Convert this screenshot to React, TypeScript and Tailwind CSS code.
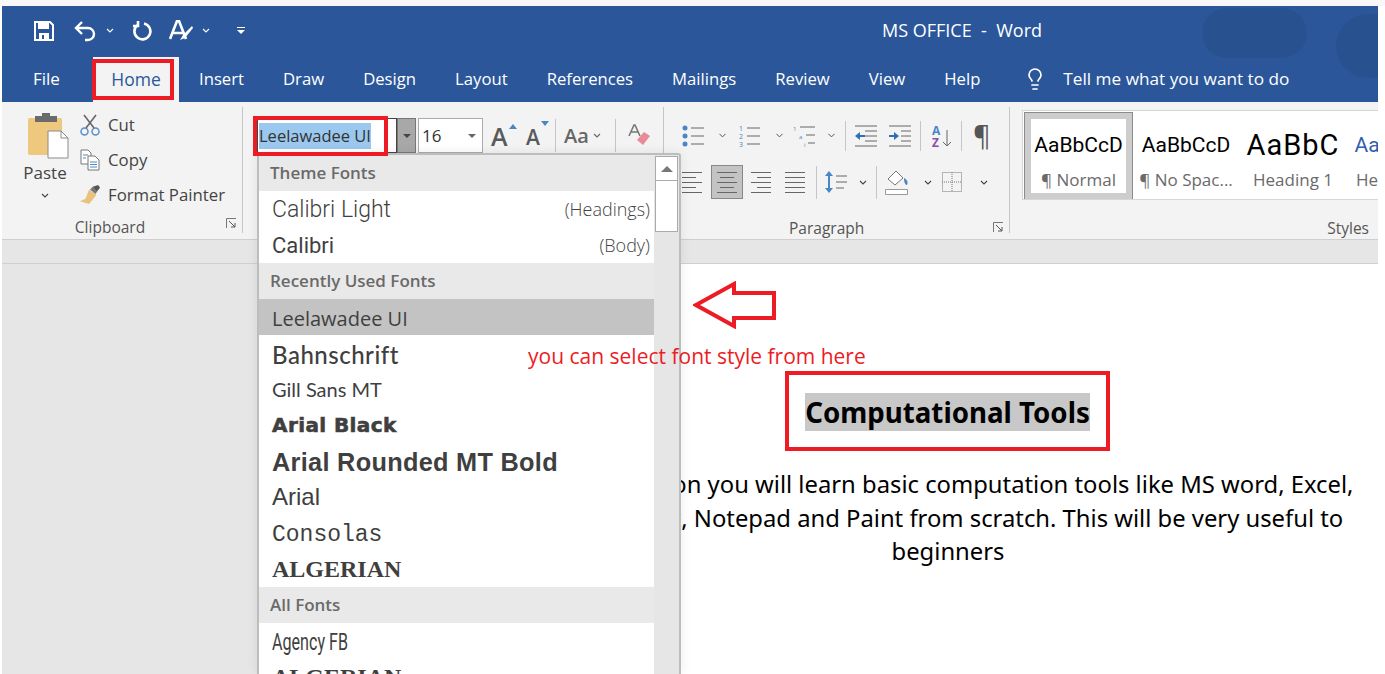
import { ChevronDown, Lightbulb } from 'lucide-react'

const tabs = ['Insert', 'Draw', 'Design', 'Layout', 'References', 'Mailings', 'Review', 'View', 'Help']

function Caret({ className = '' }: { className?: string }) {
  return (
    <svg width="8" height="5" viewBox="0 0 8 5" className={className}>
      <path d="M1 1l3 3 3-3" fill="none" stroke="currentColor" strokeWidth="1.1" />
    </svg>
  )
}

function SaveIcon() {
  return (
    <svg width="20" height="20" viewBox="0 0 20 20">
      <path d="M1 1h15l3 3v15H1z" fill="none" stroke="#fff" strokeWidth="2" />
      <path d="M4 2h11v6H4z" fill="#fff" />
      <path d="M5 12h10v7H5z" fill="#fff" />
      <path d="M8 14h2v4H8z" fill="#2b579a" />
    </svg>
  )
}

function Launcher() {
  return (
    <svg width="11" height="11" viewBox="0 0 11 11">
      <path d="M.5 10V.5H10" fill="none" stroke="#777" />
      <path d="M3 3l6 6M9 5v4H5" fill="none" stroke="#555" />
    </svg>
  )
}

function Lines({ kind }: { kind: 'left' | 'center' | 'right' | 'justify' }) {
  const rows = [
    [0, 20],
    [kind === 'left' ? 0 : kind === 'center' ? 3 : kind === 'right' ? 6 : 0, kind === 'justify' ? 20 : 14],
    [0, 20],
    [kind === 'left' ? 0 : kind === 'center' ? 3 : kind === 'right' ? 6 : 0, kind === 'justify' ? 20 : 14],
    [0, 20],
  ]
  return (
    <svg width="20" height="21" viewBox="0 0 20 21">
      {rows.map((r, i) => (
        <rect key={i} x={r[0]} y={i * 5} width={r[1]} height="1" fill="#666" />
      ))}
    </svg>
  )
}

function FontRow({ label, className, hint, selected }: { label: string; className: string; hint?: string; selected?: boolean }) {
  return (
    <div className={`h-[36px] shrink-0 flex items-center justify-between pl-[13px] pr-[4px] text-[#3f3f3f] ${selected ? 'bg-[#c3c3c3]' : 'bg-white'}`}>
      <span className={`whitespace-nowrap ${className}`}>{label}</span>
      {hint ? <span className="text-[18px] font-['Open_Sans',sans-serif] font-light text-[#444]">{hint}</span> : null}
    </div>
  )
}

function FontHeader({ label }: { label: string }) {
  return (
    <div className="h-[36px] shrink-0 flex items-center pl-[11px] bg-[#e9e9e9] text-[#6a6a6a] text-[17px] font-semibold font-['Open_Sans',sans-serif]">
      {label}
    </div>
  )
}

function StyleCard({ sample, label, sampleClass, w, active }: { sample: string; label: string; sampleClass: string; w: string; active?: boolean }) {
  return (
    <div className={`${w} h-[86px] shrink-0 flex flex-col items-center bg-white overflow-hidden ${active ? 'border-[6px] border-[#cdcdcd] outline outline-1 outline-[#8c8c8c]' : 'pt-[6px]'}`}>
      <div className={`h-[49px] pt-[4px] flex items-center whitespace-nowrap ${sampleClass}`}>{sample}</div>
      <div className="text-[17px] leading-[22px] pt-[1px] text-[#6a6a6a] whitespace-nowrap">{label}</div>
    </div>
  )
}

export default function App() {
  return (
    <div className="relative w-[1385px] h-[674px] overflow-hidden bg-white font-['Open_Sans',sans-serif]">
      <div className="h-[6px] bg-[#f8f8f8]" />
      <div className="ml-[2px] w-[1376px] h-[668px] flex flex-col bg-[#e6e6e6]">
        {/* title + tabs */}
        <div className="relative h-[96px] shrink-0 bg-[#2b579a] text-white">
          <div className="absolute right-0 top-0 w-[180px] h-[80px] overflow-hidden opacity-40">
            <div className="absolute left-[4px] top-[2px] w-[105px] h-[50px] rounded-full bg-[#264a80]" />
            <div className="absolute left-[138px] top-[8px] w-[70px] h-[64px] rounded-full bg-[#264a80]" />
          </div>
          <div className="flex items-center h-[49px] pl-[32px]">
            <SaveIcon />
            <svg width="24" height="22" viewBox="0 0 24 22" className="ml-[20px]">
              <path d="M8 2L2 8l6 6M2 8h12a6 6 0 0 1 0 12h-3" fill="none" stroke="#fff" strokeWidth="2.4" />
            </svg>
            <Caret className="ml-[8px]" />
            <svg width="20" height="22" viewBox="0 0 20 22" className="ml-[18px]">
              <path d="M12 3.5a8 8 0 1 1-6.5 1.5M6 1v5H1" fill="none" stroke="#fff" strokeWidth="2.6" />
            </svg>
            <svg width="24" height="22" viewBox="0 0 24 22" className="ml-[17px]">
              <path d="M1 19L8 1h2l7 18M4 13h10" fill="none" stroke="#fff" strokeWidth="2.6" />
              <path d="M23 6l-9 9-3 5 5-2 8-10z" fill="#fff" />
            </svg>
            <Caret className="ml-[9px]" />
            <svg width="8" height="8" viewBox="0 0 8 8" className="ml-[27px]">
              <path d="M0 0h8v1H0zM0 3h8L4 7z" fill="#fff" />
            </svg>
            <div className="absolute left-[880px] top-[11px] text-[18px] leading-[26px] whitespace-pre">MS OFFICE  -  Word</div>
          </div>
          <div className="flex items-end h-[47px]">
            <div className="w-[91px] h-[47px] pl-[31px] leading-[47px] text-[17px]">File</div>
            <div className="relative w-[86px] h-[45px] bg-[#f3f3f3] text-[#2b579a] text-[17.5px] flex items-center justify-center">
              Home
              <div className="absolute -left-[1px] top-[2px] w-[82px] h-[41px] border-[4px] border-[#ed1c24]" />
            </div>
            <div className="flex items-center h-[47px] pl-[20px] gap-[39px] text-[16.7px]">
              {tabs.map((t) => (
                <span key={t}>{t}</span>
              ))}
            </div>
            <div className="flex items-center h-[47px] ml-[43px] text-[17.2px]">
              <Lightbulb size={24} strokeWidth={1.7} />
              <span className="ml-[16px]">Tell me what you want to do</span>
            </div>
          </div>
        </div>

        {/* ribbon */}
        <div className="h-[138px] shrink-0 bg-[#f3f3f3] border-b-[1px] border-[#cfcfcf] flex text-[#444] relative">
          <div className="w-[241px] h-[126px] mt-[5px] border-r border-[#c6c6c6] relative shrink-0">
            <div className="flex h-[110px]">
              <div className="w-[78px] pl-[8px] flex flex-col items-center pt-[6px]">
                <svg width="44" height="46" viewBox="0 0 44 46" className="ml-[10px]">
                  <path d="M0 7a2 2 0 0 1 2-2h30a2 2 0 0 1 2 2v35H2a2 2 0 0 1-2-2z" fill="#edc87e" />
                  <path d="M7 3h7V0h8v3h7v6H7z" fill="#6b6b6b" />
                  <path d="M20 18h13l7 7v20H20z" fill="#fff" stroke="#8a8a8a" />
                  <path d="M33 18v7h7" fill="none" stroke="#8a8a8a" />
                </svg>
                <span className="text-[17px] leading-[26px] mt-[1px]">Paste</span>
                <Caret className="mt-[7px]" />
              </div>
              <div className="flex flex-col text-[16.8px] leading-[35px]">
                <div className="flex items-center gap-[8px]">
                  <svg width="20" height="22" viewBox="0 0 20 22">
                    <circle cx="4.5" cy="17.5" r="3.5" fill="none" stroke="#5b8fc7" strokeWidth="1.5" />
                    <circle cx="15.5" cy="17.5" r="3.5" fill="none" stroke="#5b8fc7" strokeWidth="1.5" />
                    <path d="M6 14L16 1M14 14L4 1" stroke="#666" strokeWidth="1.6" />
                  </svg>
                  Cut
                </div>
                <div className="flex items-center gap-[8px]">
                  <svg width="20" height="22" viewBox="0 0 20 22">
                    <path d="M1 1h7l3 3v11H1z" fill="#fff" stroke="#777" />
                    <path d="M8 7h7l4 4v10H8z" fill="#fff" stroke="#777" />
                    <path d="M3 6h5M3 9h3M10 13h7M10 15.5h7M10 18h7" stroke="#4f86c0" />
                  </svg>
                  Copy
                </div>
                <div className="flex items-center gap-[8px]">
                  <svg width="20" height="22" viewBox="0 0 22 22">
                    <path d="M14 2l6-2 2 3-4 5z" fill="#555" />
                    <path d="M10 5l8 6-8 10-10-3 6-3z" fill="#e9c27e" />
                    <path d="M11 5l3-3 5 5-2 3z" fill="#777" />
                  </svg>
                  Format Painter
                </div>
              </div>
            </div>
            <div className="relative text-center text-[15.5px] leading-[20px] text-[#555] pr-[24px]">
              Clipboard
              <span className="absolute right-[5px] top-[1px]"><Launcher /></span>
            </div>
          </div>

          {/* font group */}
          <div className="w-[421px] h-[126px] mt-[5px] shrink-0 flex flex-col pl-[14px] pt-[11px] border-r border-[#c6c6c6]">
            <div className="flex items-center h-[35px]">
              <div className="w-[140px] h-[35px] bg-white border border-[#444] flex items-center">
                <span className="bg-[#9bc8ee] text-[#333] text-[16.5px] leading-[26px] ml-[1px]">Leelawadee UI</span>
              </div>
              <div className="w-[19px] h-[35px] bg-[#a8a8a8] border border-[#777] flex items-center justify-center">
                <svg width="8" height="4" viewBox="0 0 8 4"><path d="M0 0h8L4 4z" fill="#444" /></svg>
              </div>
              <div className="ml-[2px] w-[65px] h-[35px] bg-white border border-[#ababab] flex items-center justify-between pl-[3px] pr-[6px] text-[17px] text-[#333]">
                16
                <svg width="8" height="4" viewBox="0 0 8 4"><path d="M0 0h8L4 4z" fill="#666" /></svg>
              </div>
              <div className="relative ml-[8px] w-[24px] text-[25px] leading-[30px] font-semibold text-[#5a5a5a]">
                A
                <svg width="8" height="5" viewBox="0 0 8 5" className="absolute right-[-2px] top-[3px]"><path d="M0 5h8L4 0z" fill="#4a86c5" /></svg>
              </div>
              <div className="relative ml-[11px] w-[20px] text-[21px] leading-[30px] font-semibold text-[#5a5a5a] pt-[3px]">
                A
                <svg width="8" height="5" viewBox="0 0 8 5" className="absolute right-[-3px] top-[2px]"><path d="M0 0h8L4 5z" fill="#4a86c5" /></svg>
              </div>
              <div className="ml-[9px] w-px h-[33px] bg-[#c6c6c6]" />
              <div className="ml-[8px] flex items-center gap-[4px] text-[20px] font-semibold text-[#666]">
                Aa <Caret />
              </div>
              <div className="ml-[14px] w-px h-[33px] bg-[#c6c6c6]" />
              <svg width="24" height="24" viewBox="0 0 24 24" className="ml-[12px]">
                <path d="M1 12L6 1h1l5 11M3 8h7" fill="none" stroke="#777" strokeWidth="1.6" />
                <path d="M16 8l6 4-7 9-6-5z" fill="#e98a97" />
              </svg>
            </div>
          </div>

          {/* paragraph */}
          <div className="w-[345px] h-[126px] mt-[5px] shrink-0 relative">
            <div className="flex items-center h-[37px] mt-[10px] pl-[18px]">
              <svg width="23" height="22" viewBox="0 0 23 22">
                <circle cx="3" cy="3" r="2.5" fill="#4a86c5" /><circle cx="3" cy="11" r="2.5" fill="#4a86c5" /><circle cx="3" cy="19" r="2.5" fill="#4a86c5" />
                <path d="M9 3h13M9 11h13M9 19h13" stroke="#666" />
              </svg>
              <ChevronDown size={11} className="ml-[12px] text-[#444]" />
              <svg width="23" height="24" viewBox="0 0 23 24" className="ml-[10px]">
                <text x="1" y="7" fontSize="7" fill="#4a86c5">1</text><text x="1" y="15" fontSize="7" fill="#4a86c5">2</text><text x="1" y="23" fontSize="7" fill="#4a86c5">3</text>
                <path d="M9 4h13M9 12h13M9 20h13" stroke="#666" />
              </svg>
              <ChevronDown size={11} className="ml-[13px] text-[#444]" />
              <svg width="23" height="24" viewBox="0 0 23 24" className="ml-[8px]">
                <text x="0" y="7" fontSize="6" fill="#4a86c5">1</text><text x="6" y="15" fontSize="6" fill="#4a86c5">a</text><text x="11" y="23" fontSize="6" fill="#4a86c5">i</text>
                <path d="M7 3h15M13 11h9M15 19h7" stroke="#666" />
              </svg>
              <ChevronDown size={11} className="ml-[10px] text-[#444]" />
              <div className="ml-[8px] w-px h-[30px] bg-[#c6c6c6]" />
              <svg width="22" height="22" viewBox="0 0 22 22" className="ml-[9px]">
                <path d="M0 1h22M10 6h12M10 11h12M10 16h12M0 21h22" stroke="#666" />
                <path d="M0 11l5-4v3h5v2H5v3z" fill="#2f6fb5" />
              </svg>
              <svg width="22" height="22" viewBox="0 0 22 22" className="ml-[12px]">
                <path d="M0 1h22M12 6h10M12 11h10M12 16h10M0 21h22" stroke="#666" />
                <path d="M10 11l-5-4v3H0v2h5v3z" fill="#2f6fb5" />
              </svg>
              <div className="ml-[9px] w-px h-[30px] bg-[#c6c6c6]" />
              <svg width="20" height="24" viewBox="0 0 20 24" className="ml-[11px]">
                <text x="0" y="11" fontSize="12" fontWeight="700" fill="#4a86c5">A</text>
                <text x="0" y="23" fontSize="12" fontWeight="700" fill="#8a4fa8">Z</text>
                <path d="M15 6v16M11 18l4 4 4-4" fill="none" stroke="#666" />
              </svg>
              <div className="ml-[9px] w-px h-[30px] bg-[#c6c6c6]" />
              <span className="ml-[11px] text-[27px] leading-[30px] text-[#555]">¶</span>
            </div>
            <div className="flex items-center h-[36px] mt-[10px] pl-[18px]">
              <Lines kind="left" />
              <div className="w-[32px] h-[34px] bg-[#c3c3c3] border border-[#888] flex items-center justify-center ml-[9px]"><Lines kind="center" /></div>
              <div className="ml-[8px]"><Lines kind="right" /></div>
              <div className="ml-[14px]"><Lines kind="justify" /></div>
              <div className="ml-[11px] w-px h-[33px] bg-[#c6c6c6]" />
              <svg width="23" height="24" viewBox="0 0 23 24" className="ml-[8px]">
                <path d="M4 1l4 5H5v12h3l-4 5-4-5h3V6H0z" fill="#4a86c5" />
                <path d="M11 6h11M11 12h11M11 18h8" stroke="#666" />
              </svg>
              <Caret className="ml-[11px] text-[#444]" />
              <div className="ml-[9px] w-px h-[33px] bg-[#c6c6c6]" />
              <svg width="24" height="26" viewBox="0 0 24 26" className="ml-[8px]">
                <path d="M3 10l8-8 7 7-8 7z" fill="#fff" stroke="#777" />
                <path d="M19 9c4 2 4 5 3 7-2 0-3-3-3-7z" fill="#4a86c5" />
                <path d="M.5 20.5h22v5H.5z" fill="#fff" stroke="#999" />
              </svg>
              <Caret className="ml-[15px] text-[#444]" />
              <svg width="20" height="20" viewBox="0 0 20 20" className="ml-[10px]">
                <path d="M.5.5h19v19H.5z" fill="none" stroke="#777" strokeDasharray="1 1" />
                <path d="M10 0v20M0 10h20" stroke="#777" strokeDasharray="1 1" />
              </svg>
              <Caret className="ml-[18px] text-[#444]" />
            </div>
            <div className="absolute top-[111px] left-[125px] text-[15.5px] leading-[20px] text-[#555]">Paragraph</div>
            <span className="absolute right-[5px] top-[115px]"><Launcher /></span>
          </div>

          {/* styles */}
          <div className="flex-1 min-w-0 h-[126px] mt-[5px] border-l border-[#c6c6c6] relative pl-[12px] pt-[3px]">
            <div className="flex h-[90px] overflow-hidden bg-white border border-[#d6d6d6] border-r-0 pl-[2px] pt-[2px] gap-[1px]">
              <StyleCard sample="AaBbCcD" label="¶ Normal" sampleClass="text-[21px] text-black font-['Roboto',sans-serif]" w="w-[107px]" active />
              <StyleCard sample="AaBbCcD" label="¶ No Spac..." sampleClass="text-[21px] text-black font-['Roboto',sans-serif]" w="w-[106px]" />
              <StyleCard sample="AaBbC" label="Heading 1" sampleClass="text-[29px] text-black font-['Roboto',sans-serif] tracking-[1px]" w="w-[106px]" />
              <StyleCard sample="Aa" label="He" sampleClass="text-[21px] text-[#2f5fb3] font-['Roboto',sans-serif]" w="w-[40px]" />
            </div>
            <div className="absolute right-[9px] top-[111px] text-[15.5px] leading-[20px] text-[#555]">Styles</div>
          </div>
        </div>

        {/* ruler strip + document */}
        <div className="h-[24px] shrink-0 bg-[#e6e6e6] border-b border-[#cfcfcf]" />
        <div className="flex-1 relative flex min-h-0">
          <div className="w-[678px] shrink-0 bg-[#e6e6e6]" />
          <div className="flex-1 bg-white relative flex flex-col items-start pt-[107px] font-['Noto_Sans',sans-serif]">
            <div className="ml-[105px] w-[325px] h-[80px] pt-[2px] border-[4px] border-[#ed1c24] flex items-center justify-center">
              <span className="bg-[#c8c8c8] text-[27.7px] leading-[38px] font-bold text-black">Computational Tools</span>
            </div>
            <div className="mt-[17px] w-[850px] -ml-[157px] text-center text-[23.8px] leading-[33.5px] text-black whitespace-nowrap">
              <div>In this session you will learn basic computation tools like MS word, Excel,</div>
              <div>PowerPoint, Notepad and Paint from scratch. This will be very useful to</div>
              <div>beginners</div>
            </div>
          </div>
        </div>
      </div>

      {/* font dropdown */}
      <div className="absolute left-[257px] top-[153px] w-[424px] h-[521px] border-2 border-[#bdbdbd] border-b-0 bg-[#e6e6e6] rounded-tr-[3px] flex shadow-[0_0_12px_rgba(0,0,0,0.08)]">
        <div className="w-[395px] shrink-0 flex flex-col overflow-hidden">
          <FontHeader label="Theme Fonts" />
          <FontRow label="Calibri Light" className="text-[23px] font-['Roboto',sans-serif] font-light translate-y-[1px]" hint="(Headings)" />
          <FontRow label="Calibri" className="text-[22px] font-['Roboto',sans-serif]" hint="(Body)" />
          <FontHeader label="Recently Used Fonts" />
          <FontRow label="Leelawadee UI" className="text-[20px] font-['Open_Sans',sans-serif] translate-y-[2px]" selected />
          <FontRow label="Bahnschrift" className="text-[24px] font-['Lato',sans-serif] font-medium tracking-[0.5px] translate-y-[2px]" />
          <FontRow label="Gill Sans MT" className="text-[20px] font-['Lato',sans-serif]" />
          <FontRow label="Arial Black" className="text-[20px] font-bold font-['DejaVu_Sans',sans-serif] tracking-[0.4px] [-webkit-text-stroke:0.6px_#3f3f3f]" />
          <FontRow label="Arial Rounded MT Bold" className="text-[25.3px] font-bold font-['Liberation_Sans',sans-serif] tracking-[0.3px] translate-y-[2px]" />
          <FontRow label="Arial" className="text-[24px] font-['Liberation_Sans',sans-serif]" />
          <FontRow label="Consolas" className="text-[23px] font-['Liberation_Mono',monospace] translate-y-[2px]" />
          <FontRow label="ALGERIAN" className="text-[24px] font-bold font-['Liberation_Serif',serif]" />
          <FontHeader label="All Fonts" />
          <FontRow label="Agency FB" className="text-[23px] font-['Roboto',sans-serif] scale-x-[0.7] origin-left translate-y-[2px]" />
          <FontRow label="ALGERIAN" className="text-[24px] font-bold font-['Liberation_Serif',serif]" />
        </div>
        <div className="flex-1 relative pt-[1px]">
          <div className="h-[25px] mx-[1px] bg-white border border-[#ababab] flex items-center justify-center">
            <svg width="12" height="6" viewBox="0 0 12 6"><path d="M0 6h12L6 0z" fill="#777" /></svg>
          </div>
          <div className="h-[51px] mx-[1px] bg-white border border-[#ababab] border-t-0" />
        </div>
      </div>

      {/* annotations */}
      <div className="absolute left-[253px] top-[116px] w-[135px] h-[40px] border-[4px] border-[#ed1c24]" />
      <svg width="84" height="48" viewBox="0 0 84 48" className="absolute left-[693px] top-[281px]">
        <path d="M3 24L41 3v9h40v25H41v8z" fill="#fff" stroke="#ed1c24" strokeWidth="4" />
      </svg>
      <div className="absolute left-[528px] top-[342px] text-[21px] leading-[28px] text-[#ed1c24] whitespace-nowrap">you can select font style from here</div>
    </div>
  )
}
